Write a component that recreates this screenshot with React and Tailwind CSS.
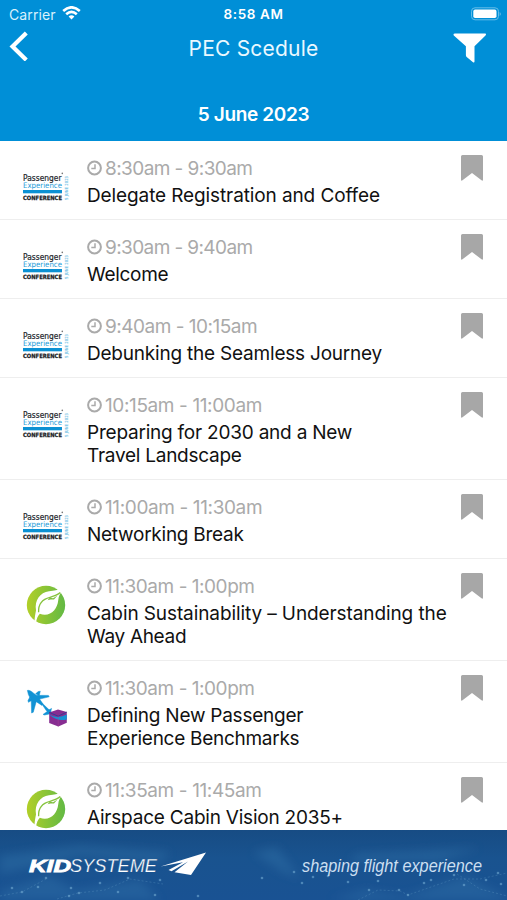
import React from "react";

const SESSIONS = [
  { time: "8:30am - 9:30am", timeTracking: "tracking-[-0.57px]", lines: [["Delegate Registration and Coffee", "tracking-[-0.11px]"]], logo: "pec" },
  { time: "9:30am - 9:40am", timeTracking: "tracking-[-0.6px]", lines: [["Welcome", "tracking-[-0.3px]"]], logo: "pec" },
  { time: "9:40am - 10:15am", timeTracking: "tracking-[-0.5px]", lines: [["Debunking the Seamless Journey", "tracking-[-0.21px]"]], logo: "pec" },
  { time: "10:15am - 11:00am", timeTracking: "tracking-[-0.38px]", lines: [["Preparing for 2030 and a New", "tracking-[-0.22px]"], ["Travel Landscape", "tracking-[-0.26px]"]], logo: "pec" },
  { time: "11:00am - 11:30am", timeTracking: "tracking-[-0.38px]", lines: [["Networking Break", "tracking-[-0.26px]"]], logo: "pec" },
  { time: "11:30am - 1:00pm", timeTracking: "tracking-[-0.46px]", lines: [["Cabin Sustainability – Understanding the", "tracking-[-0.1px]"], ["Way Ahead", "tracking-[-0.32px]"]], logo: "leaf" },
  { time: "11:30am - 1:00pm", timeTracking: "tracking-[-0.46px]", lines: [["Defining New Passenger", "tracking-[-0.24px]"], ["Experience Benchmarks", "tracking-[-0.28px]"]], logo: "plane" },
  { time: "11:35am - 11:45am", timeTracking: "tracking-[-0.38px]", lines: [["Airspace Cabin Vision 2035+", "tracking-[-0.22px]"]], logo: "leaf" },
];

function ConferenceLogo() {
  return (
    <svg className="block h-[50px] w-[50px] font-['DejaVu_Sans',sans-serif]" viewBox="0 0 50 50">
      <text x="2" y="18.6" fontSize="8.3" fill="#202429" stroke="#202429" strokeWidth=".2" textLength="38.5" lengthAdjust="spacingAndGlyphs">Passenger</text>
      <text x="2" y="25.8" fontSize="7.6" fill="#249bd8" textLength="39" lengthAdjust="spacingAndGlyphs">Experience</text>
      <circle cx="41.3" cy="11.4" r=".8" fill="#777" />
      <rect x="2" y="28" width="39" height="3.3" fill="#0c91d3" />
      <text x="2" y="38" fontSize="5.8" fontWeight="700" fill="#15181c" stroke="#15181c" strokeWidth=".25" textLength="39" lengthAdjust="spacingAndGlyphs">CONFERENCE</text>
      <text x="44" y="38" transform="rotate(-90 44 38)" dy="3.4" fontSize="4.4" fontWeight="700" fill="#87c9e8" textLength="24" lengthAdjust="spacingAndGlyphs">5 JUNE 2023</text>
    </svg>
  );
}

function LeafLogo({ id }) {
  return (
    <svg className="block h-[50px] w-[50px]" viewBox="0 0 50 50">
      <defs>
        <linearGradient id={id} x1="0" x2="1" y1="0" y2="0">
          <stop offset="0" stopColor="#b2cf28" />
          <stop offset="1" stopColor="#62b944" />
        </linearGradient>
      </defs>
      <circle cx="25" cy="25" r="19.2" fill={`url(#${id})`} />
      <path d="M13.4 41.5C13.8 36.5 14.3 34 15 30.5C13.3 20 19 12.5 28 11.2C33.5 10.4 36.5 10.3 39.3 8.2L41.3 11C39 13.5 37.6 16 37.2 20.5C36.4 29.5 29 37.5 18.8 33.8C16.8 36 15.8 38.5 15.1 42Z" fill="white" />
      <path d="M17.6 32.2C17.2 24.5 21 19.2 29 17.3C33.3 16.2 36.4 15.2 39.3 12.6" fill="none" stroke="#86c33c" strokeWidth="1.3" />
      <path d="M26.5 20.2L29 17.4L32 18.2L36.5 15.4L33 19.6L29.5 19.6Z" fill="#80c040" />
    </svg>
  );
}

function PlaneLogo() {
  return (
    <svg className="block h-[50px] w-[50px]" viewBox="0 0 50 50">
      <g fill="#1192d4" stroke="#1192d4" strokeWidth=".5" strokeLinejoin="round">
        <path d="M6.4 8.4C8.1 8 10.3 9.1 12.6 11.2L15.3 13.3L27.4 13.4L28.2 14.8L18.6 17.1L22.2 22.2L21 23.4L15.2 19.7L12.3 30.2L10.6 31L10.2 18.2L7.4 12.6Z" />
        <path d="M14.6 11.8L17.2 9.6L19.3 9.2L18.2 13.8ZM8.8 15.2L7 18.4L7.4 20.3L11.1 18.2Z" />
        <path d="M20.2 21.1L22.6 22.5L28.6 28.3L34 33.7L28.4 31.9L23.6 33L22 32.4L26.2 29.6L25.2 28.4ZM26.8 28.5L30.6 26.4L29.6 30Z" />
      </g>
      <path d="M28.2 30.5L37 27.4L45.8 30V40.7L37.3 44.6L28.2 41Z" fill="#872d91" />
      <path d="M28 32.3Q36 37.4 45.8 32.6V37.4Q36 40 28 32.3Z" fill="#1691d3" />
      <path d="M28.3 30.4L37.2 34.2L45.7 30.1" fill="none" stroke="#393a93" strokeWidth="1" />
      <path d="M37.2 34.3V44.5" stroke="#a74194" strokeWidth=".5" />
    </svg>
  );
}

function Session({ item, index }) {
  return (
    <li className="flex shrink-0 border-b border-[#eeeeee] pb-[12px] pt-[16px]">
      <div className="-mb-[12px] mt-[5px] w-[86px] shrink-0 pl-[21px]">
        {item.logo === "pec" && <ConferenceLogo />}
        {item.logo === "leaf" && <LeafLogo id={`leaf-${index}`} />}
        {item.logo === "plane" && <PlaneLogo />}
      </div>
      <div className="min-w-0 flex-1 whitespace-nowrap pl-px text-[19px] leading-[23px]">
        <div className="flex h-[27px] items-start text-[#aaa]">
          <svg className="mr-[3px] mt-[3px] h-4 w-[15px] shrink-0" viewBox="0 0 15 16" fill="none" stroke="#aaa" strokeWidth="2">
            <circle cx="7.5" cy="8" r="6.4" />
            <path d="M8 4.2V8.5H4.3" strokeWidth="1.5" />
          </svg>
          <span className={item.timeTracking}>{item.time}</span>
        </div>
        {item.lines.map(([line, tracking]) => <div key={line} className={`text-[#111] ${tracking}`}>{line}</div>)}
      </div>
      <svg className="-mt-[2px] mr-[24px] h-[26px] w-[22px] shrink-0" viewBox="0 0 22 26" fill="#a7a7a7">
        <path d="M1.5 0H20.5Q22 0 22 1.5V24.5Q22 26.5 20.5 25.3L11 18L1.5 25.3Q0 26.5 0 24.5V1.5Q0 0 1.5 0Z" />
      </svg>
    </li>
  );
}

const DOTS = [[12,58],[22,62],[38,57],[46,48],[71,58],[69,66],[79,63],[100,53],[118,62],[128,48],[155,65],[160,50],[198,66],[262,48],[294,42],[302,53],[313,47],[328,46],[348,52],[369,60],[378,51],[399,60],[408,65],[424,53],[431,50],[454,45],[464,55],[486,50],[498,43],[501,54]];

export default function App() {
  return (
    <main className="flex h-[900px] w-[507px] flex-col overflow-hidden bg-white font-['Inter',sans-serif]">
      <header className="h-[141px] shrink-0 bg-[#008fd7] text-white">
        <div className="grid h-[28px] grid-cols-3 items-center px-[9px] text-[13.5px]">
          <div className="flex items-center gap-[6px]">
            <span className="text-[14px] tracking-[.1px] text-[#d9f1fc]">Carrier</span>
            <svg className="-mt-[2px] h-[14px] w-[19px]" viewBox="0 0 19 14" fill="none" stroke="white" strokeWidth="2.6">
              <path d="M1.2 5Q9.5 -2.4 17.8 5M4.2 8.3Q9.5 3.6 14.8 8.3" />
              <path d="M6.6 10.5Q9.5 8.2 12.4 10.5L9.5 13.5Z" fill="white" stroke="none" />
            </svg>
          </div>
          <span className="whitespace-nowrap text-center font-semibold tracking-[.6px]">8:58 AM</span>
          <svg className="-mr-[3px] -mt-px h-[14px] w-[30px] justify-self-end" viewBox="0 0 30 14">
            <rect x=".5" y=".8" width="27" height="12" rx="3.5" fill="none" stroke="#65bce8" />
            <rect x="2.3" y="2.6" width="23.2" height="8.5" rx="1.8" fill="white" />
            <path d="M28.7 5Q31 7 28.7 9Z" fill="#65bce8" />
          </svg>
        </div>
        <div className="grid h-[40px] grid-cols-[54px_1fr_54px] items-center">
          <svg className="ml-[9px] -mt-[6px] h-[30px] w-5" viewBox="0 0 20 30" fill="none" stroke="white" strokeWidth="4.2">
            <path d="M17.3 2L3.5 15.5L17.3 29" />
          </svg>
          <h1 className="pt-px text-center text-[21px] font-normal leading-[40px] tracking-[.2px] text-[#eaf8ff]">PEC Scedule</h1>
          <svg className="-mt-[2px] h-[30px] w-[34px]" viewBox="0 0 34 30" fill="white">
            <path d="M2 .5H32Q34 .5 32.5 2.4L21.5 13.2V28.5Q21.4 30 20 29.2L13.7 24Q12.9 23.3 12.9 22V13.2L.8 2.4Q-.2 .5 2 .5Z" />
          </svg>
        </div>
        <h2 className="mt-[32px] text-center text-[19px] font-semibold leading-[30px] tracking-[-0.36px]">5 June 2023</h2>
      </header>
      <ul className="flex min-h-0 flex-1 flex-col overflow-hidden">
        {SESSIONS.map((item, index) => <Session key={index} item={item} index={index} />)}
      </ul>
      <footer className="h-[70px] shrink-0">
        <svg className="block h-[70px] w-[507px]" viewBox="0 0 507 70">
          <defs>
            <linearGradient id="sea" x1="0" x2="0" y1="0" y2="1"><stop stopColor="#174c84" /><stop offset=".4" stopColor="#19538f" /><stop offset="1" stopColor="#195293" /></linearGradient>
            <filter id="soft"><feGaussianBlur stdDeviation="5" /></filter>
          </defs>
          <rect width="507" height="70" fill="url(#sea)" />
          <g filter="url(#soft)" fill="#3978ad" opacity=".35">
            <path d="M0 26L80 15L170 22L160 32L80 26L0 44ZM253 22L277 17L300 48L282 42ZM357 24L480 18L440 31L350 32Z" />
            <path d="M0 61L50 46L75 60L140 50L160 70H0ZM330 70L365 60L405 66L465 46L507 67V70Z" />
          </g>
          <g fill="none" stroke="#72aad1" strokeWidth="1" opacity=".25" strokeDasharray="2 2">
            <path d="M0 66L22 62L46 49M57 69L78 63L105 60L130 49L163 54M358 70L378 60L400 61L408 65L431 57L454 49L480 49L507 43M457 44L480 59L507 66" />
          </g>
          <g fill="#79b1d7" opacity=".55">{DOTS.map(([x, y], i) => <circle key={i} cx={x} cy={y} r="1.3" />)}</g>
          <g className="font-['Liberation_Sans',sans-serif]" fill="white">
            <text x="29" y="41.5" fontSize="17" fontWeight="700" fontStyle="italic" stroke="white" strokeWidth=".8" textLength="42" lengthAdjust="spacingAndGlyphs">KID</text>
            <text x="70" y="41.5" fontSize="17.5" fontStyle="italic" stroke="#19538f" strokeWidth=".25" textLength="87" lengthAdjust="spacingAndGlyphs">SYSTEME</text>
            <path d="M160.5 36.5L206 22.5L191 45L174.5 42.2L188 31.5L171.5 41.2L168.5 40L183 32.2Z" />
            <text x="302" y="41.5" fontSize="18" fontStyle="italic" fill="#cbdff1" textLength="180" lengthAdjust="spacingAndGlyphs">shaping flight experience</text>
          </g>
        </svg>
      </footer>
    </main>
  );
}
